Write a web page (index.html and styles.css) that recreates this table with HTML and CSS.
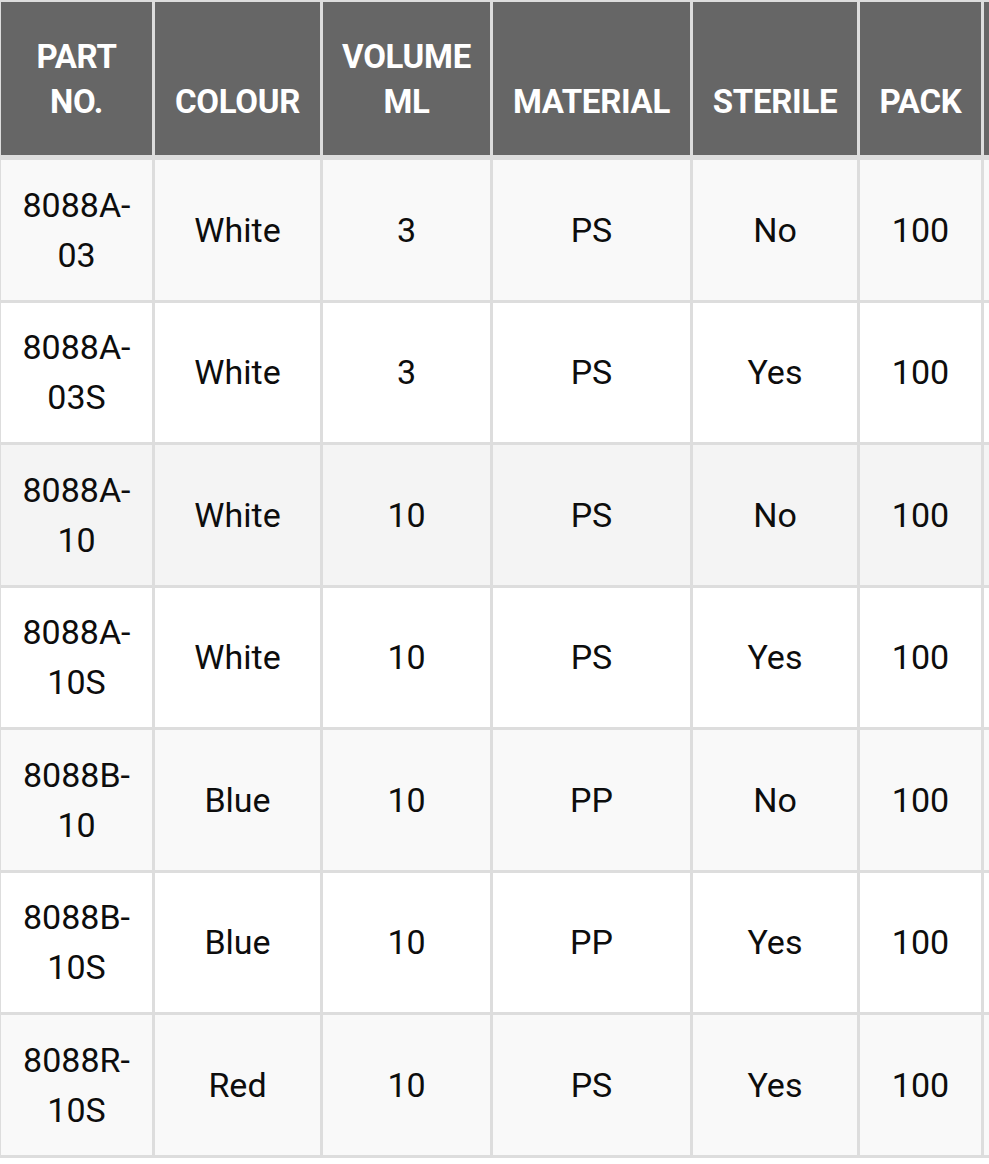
FILE: index.html
```html
<!DOCTYPE html>
<html lang="en">
<head>
<meta charset="utf-8">
<title>Parts table</title>
<link rel="stylesheet" href="styles.css">
</head>
<body>
<div class="table-wrap">
  <table class="parts">
    <colgroup>
      <col class="c-part">
      <col class="c-colour">
      <col class="c-volume">
      <col class="c-material">
      <col class="c-sterile">
      <col class="c-pack">
      <col class="c-extra">
    </colgroup>
    <thead>
      <tr>
        <th>PART NO.</th>
        <th>COLOUR</th>
        <th>VOLUME ML</th>
        <th>MATERIAL</th>
        <th>STERILE</th>
        <th>PACK</th>
        <th></th>
      </tr>
    </thead>
    <tbody>
      <tr><td>8088A-03</td><td>White</td><td>3</td><td>PS</td><td>No</td><td>100</td><td></td></tr>
      <tr><td>8088A-03S</td><td>White</td><td>3</td><td>PS</td><td>Yes</td><td>100</td><td></td></tr>
      <tr class="row-hover"><td>8088A-10</td><td>White</td><td>10</td><td>PS</td><td>No</td><td>100</td><td></td></tr>
      <tr><td>8088A-10S</td><td>White</td><td>10</td><td>PS</td><td>Yes</td><td>100</td><td></td></tr>
      <tr><td>8088B-10</td><td>Blue</td><td>10</td><td>PP</td><td>No</td><td>100</td><td></td></tr>
      <tr><td>8088B-10S</td><td>Blue</td><td>10</td><td>PP</td><td>Yes</td><td>100</td><td></td></tr>
      <tr><td>8088R-10S</td><td>Red</td><td>10</td><td>PS</td><td>Yes</td><td>100</td><td></td></tr>
    </tbody>
  </table>
</div>
</body>
</html>
```
FILE: styles.css
```css
html, body {
  margin: 0;
  padding: 0;
  background: #ffffff;
}

.table-wrap {
  width: 989px;
  overflow: hidden;
}

.parts {
  width: 1144px;
  table-layout: fixed;
  border-collapse: separate;
  border-spacing: 0;
  font-family: Roboto, "Liberation Sans", sans-serif;
}

.c-part { width: 155px; }
.c-colour { width: 168px; }
.c-volume { width: 170px; }
.c-material { width: 200px; }
.c-sterile { width: 167px; }
.c-pack { width: 124px; }
.c-extra { width: 160px; }

.parts th,
.parts td {
  box-sizing: border-box;
  text-align: center;
  border-right: 3px solid #dddddd;
  padding-left: 10px;
  padding-right: 10px;
}

.parts th:first-child,
.parts td:first-child {
  border-left: 1px solid #dddddd;
}

.parts th {
  vertical-align: bottom;
  background: #666666;
  color: #ffffff;
  font-weight: 700;
  font-size: 33px;
  line-height: 45px;
  letter-spacing: -0.3px;
  padding-top: 31.5px;
  padding-bottom: 31.5px;
  border-top: 2px solid #dddddd;
  border-bottom: 5px solid #dddddd;
}

.parts td {
  vertical-align: middle;
  color: #0d0d0d;
  font-size: 34px;
  line-height: 50px;
  padding-top: 19.75px;
  padding-bottom: 19.75px;
  border-bottom: 3px solid #dddddd;
}

.parts tbody tr:nth-child(odd) td {
  background: #f9f9f9;
}

.parts tbody tr:nth-child(even) td {
  background: #ffffff;
}

.parts tbody tr.row-hover td {
  background: #f4f4f4;
}
```
